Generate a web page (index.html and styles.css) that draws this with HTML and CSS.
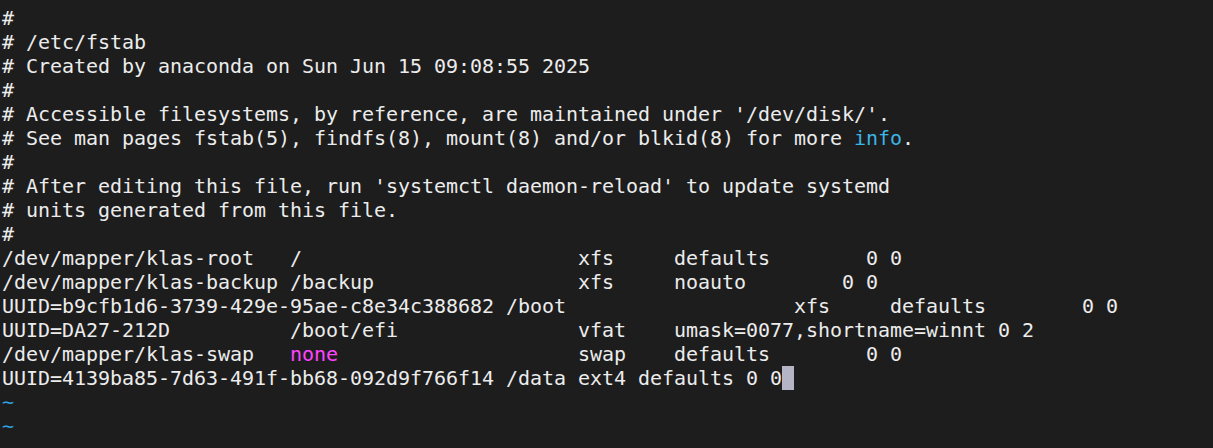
FILE: index.html
```html
<!DOCTYPE html>
<html>
<head>
<meta charset="utf-8">
<link rel="stylesheet" href="styles.css">
</head>
<body>
<pre class="term">#
# /etc/fstab
# Created by anaconda on Sun Jun 15 09:08:55 2025
#
# Accessible filesystems, by reference, are maintained under '/dev/disk/'.
# See man pages fstab(5), findfs(8), mount(8) and/or blkid(8) for more <span class="kw">info</span>.
#
# After editing this file, run 'systemctl daemon-reload' to update systemd
# units generated from this file.
#
/dev/mapper/klas-root   /                       xfs     defaults        0 0
/dev/mapper/klas-backup /backup                 xfs     noauto        0 0
UUID=b9cfb1d6-3739-429e-95ae-c8e34c388682 /boot                   xfs     defaults        0 0
UUID=DA27-212D          /boot/efi               vfat    umask=0077,shortname=winnt 0 2
/dev/mapper/klas-swap   <span class="none">none</span>                    swap    defaults        0 0
UUID=4139ba85-7d63-491f-bb68-092d9f766f14 /data ext4 defaults 0 0<span class="cursor"> </span>
<span class="tilde">~</span>
<span class="tilde">~</span></pre>
</body>
</html>
```
FILE: styles.css
```css
html, body {
  margin: 0;
  padding: 0;
  background: #1d1d1d;
  height: 100%;
  overflow: hidden;
}
.term {
  margin: 0;
  padding: 6px 0 0 2px;
  font-family: "DejaVu Sans Mono", monospace;
  font-size: 20px;
  letter-spacing: -0.04px;
  line-height: 24px;
  color: #ececec;
  white-space: pre;
}
.kw {
  color: #3cb4e6;
}
.none {
  color: #ff44ff;
}
.tilde {
  color: #2fa4e4;
}
.cursor {
  background: #b4b4c6;
  display: inline-block;
  width: 12px;
  height: 24px;
  vertical-align: top;
}
```
